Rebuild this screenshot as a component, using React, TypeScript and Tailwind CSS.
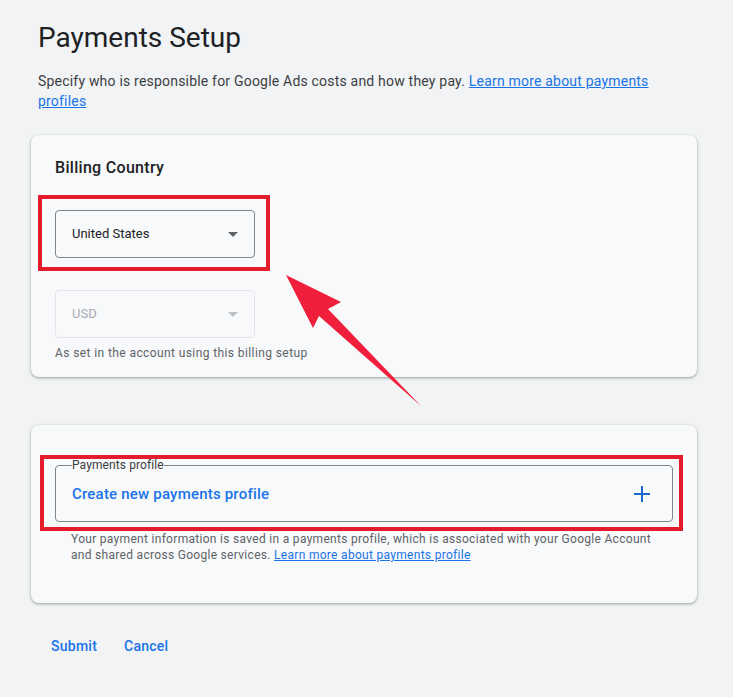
import React from 'react';

const Caret: React.FC<{ className?: string }> = ({ className }) => (
  <svg width="10" height="5" viewBox="0 0 10 5" className={className}>
    <path d="M0 0 L10 0 L5 5 Z" fill="currentColor" />
  </svg>
);

const App: React.FC = () => {
  return (
    <div className="relative min-h-[697px] w-[733px] bg-[#f1f3f4] font-['Roboto',sans-serif] text-[#202124]">
      <div className="pl-[31px] pr-[36px] pt-[20px]">
        {/* Header */}
        <h1 className="pl-[7px] text-[28px] leading-[36px] font-normal text-[#202124]">Payments Setup</h1>
        <p className="mt-[15px] pl-[7px] pr-[40px] text-[14px] leading-[20px] tracking-[0.2px] text-[#3c4043]">
          Specify who is responsible for Google Ads costs and how they pay.{' '}
          <a href="#" className="text-[#1a73e8] underline">Learn more about payments profiles</a>
        </p>

        {/* Billing country card */}
        <div className="mt-[24px] rounded-[8px] bg-[#f8f9fa] px-[24px] pt-[21px] pb-[16px] shadow-[0_1px_2px_rgba(60,64,67,0.3),0_1px_3px_1px_rgba(60,64,67,0.15)]">
          <h2 className="text-[16px] leading-[24px] font-medium tracking-[0.3px] text-[#202124]">Billing Country</h2>

          <div className="relative mt-[30px] w-[200px]">
            <div className="flex h-[48px] items-center justify-between rounded-[4px] border border-[#80868b] pl-[16px] pr-[16px]">
              <span className="text-[13px] text-[#202124]">United States</span>
              <Caret className="text-[#5f6368]" />
            </div>
            <div className="pointer-events-none absolute -left-[17px] -right-[15px] -top-[15px] -bottom-[13px] border-[4px] border-[#e41b2b]" />
          </div>

          <div className="mt-[32px] flex h-[48px] w-[200px] items-center justify-between rounded-[4px] border border-[#e3e5e8] pl-[16px] pr-[16px]">
            <span className="text-[13px] text-[#a8acb0]">USD</span>
            <Caret className="text-[#bdc1c6]" />
          </div>
          <p className="mt-[7px] text-[12px] leading-[16px] tracking-[0.4px] text-[#5f6368]">As set in the account using this billing setup</p>
        </div>

        {/* Payments profile card */}
        <div className="mt-[48px] rounded-[8px] bg-[#f8f9fa] px-[24px] pt-[34px] pb-[40px] shadow-[0_1px_2px_rgba(60,64,67,0.3),0_1px_3px_1px_rgba(60,64,67,0.15)]">
          <div className="relative">
            <fieldset className="rounded-[4px] border border-[#80868b] pl-[16px] pr-[22px] pb-[17px] pt-[13px]">
              <legend className="text-[12px] leading-[12px] tracking-[0.1px] text-[#3c4043]">Payments profile</legend>
              <div className="flex items-center justify-between">
                <span className="text-[15px] leading-[20px] font-medium tracking-[0.2px] text-[#1a73e8]">Create new payments profile</span>
                <svg width="16" height="16" viewBox="0 0 16 16" className="text-[#1967d2]">
                  <path d="M8 0 V16 M0 8 H16" stroke="currentColor" strokeWidth="2" />
                </svg>
              </div>
            </fieldset>
            <div className="pointer-events-none absolute -left-[15px] -right-[10px] top-[-4px] -bottom-[9px] border-[4px] border-[#e41b2b]" />
          </div>
          <p className="mt-[9px] pl-[16px] text-[12px] leading-[16px] tracking-[0.3px] text-[#5f6368]">
            Your payment information is saved in a payments profile, which is associated with your Google Account and shared across Google services.{' '}
            <a href="#" className="text-[#1a73e8] underline">Learn more about payments profile</a>
          </p>
        </div>

        {/* Actions */}
        <div className="mt-[33px] flex gap-[27px] pl-[20px]">
          <button className="text-[14px] leading-[20px] font-medium tracking-[0.25px] text-[#1a73e8]">Submit</button>
          <button className="text-[14px] leading-[20px] font-medium tracking-[0.25px] text-[#1a73e8]">Cancel</button>
        </div>
      </div>

      {/* Annotation arrow */}
      <svg className="pointer-events-none absolute left-0 top-0" width="733" height="697" viewBox="0 0 733 697">
        <polygon
          points="286,275 341,302 328,309 421,406 319,316 313,328"
          fill="#f0203c"
        />
      </svg>
    </div>
  );
};

export default App;
